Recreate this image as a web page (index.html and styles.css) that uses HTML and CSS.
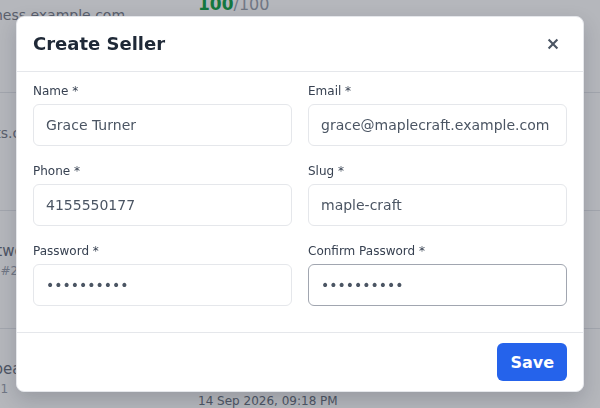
FILE: index.html
```html
<!DOCTYPE html>
<html lang="en">
<head>
<meta charset="utf-8">
<title>Create Seller</title>
<link rel="stylesheet" href="styles.css">
</head>
<body>
<div class="page">
  <div class="row">
    <div class="cell-main">
      <div class="line-name muted">business.example.com</div>
    </div>
    <div class="cell-score">
      <div class="score"><span class="score-value">100</span><span class="score-max">/100</span></div>
      <div class="date">12 Sep 2026, 10:02 AM</div>
    </div>
  </div>
  <div class="row">
    <div class="cell-main">
      <div class="line-name muted">plants.com</div>
    </div>
    <div class="cell-score">
      <div class="score"><span class="score-value">98</span><span class="score-max">/100</span></div>
      <div class="date">13 Sep 2026, 02:45 PM</div>
    </div>
  </div>
  <div class="row">
    <div class="cell-main">
      <div class="line-name">Fleetwood Goods</div>
      <div class="line-sub">Store #2</div>
    </div>
    <div class="cell-score">
      <div class="score"><span class="score-value">95</span><span class="score-max">/100</span></div>
      <div class="date">14 Sep 2026, 08:30 AM</div>
    </div>
  </div>
  <div class="row">
    <div class="cell-main">
      <div class="line-name">Sunbeam Studio</div>
      <div class="line-sub">Store 1</div>
    </div>
    <div class="cell-score">
      <div class="score"><span class="score-value">100</span><span class="score-max">/100</span></div>
      <div class="date">14 Sep 2026, 09:18 PM</div>
    </div>
  </div>
</div>

<div class="overlay">
  <div class="modal" role="dialog" aria-labelledby="modal-title">
    <div class="modal-header">
      <h2 class="modal-title" id="modal-title">Create Seller</h2>
      <button class="close-btn" type="button" aria-label="Close">
        <svg width="12" height="12" viewBox="0 0 12 12" aria-hidden="true">
          <path d="M1.6 1.6 L10.4 10.4 M10.4 1.6 L1.6 10.4" stroke="#4b5563" stroke-width="2.1" fill="none"/>
        </svg>
      </button>
    </div>
    <form class="modal-body">
      <div class="field">
        <label class="field-label">Name *</label>
        <input class="field-input" type="text" value="Grace Turner">
      </div>
      <div class="field">
        <label class="field-label">Email *</label>
        <input class="field-input" type="text" value="grace@maplecraft.example.com">
      </div>
      <div class="field">
        <label class="field-label">Phone *</label>
        <input class="field-input" type="text" value="4155550177">
      </div>
      <div class="field">
        <label class="field-label">Slug *</label>
        <input class="field-input" type="text" value="maple-craft">
      </div>
      <div class="field">
        <label class="field-label">Password *</label>
        <input class="field-input" type="password" value="secretpass">
      </div>
      <div class="field">
        <label class="field-label">Confirm Password *</label>
        <input class="field-input is-focused" type="password" value="secretpass">
      </div>
    </form>
    <div class="modal-footer">
      <button class="save-btn" type="button">Save</button>
    </div>
  </div>
</div>
</body>
</html>
```

FILE: styles.css
```css
html, body {
  margin: 0;
  padding: 0;
}

body {
  width: 600px;
  height: 408px;
  overflow: hidden;
  background: #ffffff;
  font-family: "DejaVu Sans", "Noto Sans", sans-serif;
  color: #374151;
}

/* background page (table of sellers) */
.page {
  margin-left: -35px;
  margin-top: -25px;
  height: 433px;
  overflow: hidden;
}

.row {
  display: flex;
  height: 118px;
  box-sizing: border-box;
  border-bottom: 1px solid #e5e7eb;
  padding-top: 30px;
}

.cell-main {
  width: 233px;
  flex-shrink: 0;
}

.line-name {
  font-size: 15px;
  line-height: 20px;
  white-space: nowrap;
  color: #6b7280;
}

.line-name.muted {
  font-size: 14px;
  color: #7b818c;
}

.line-sub {
  font-size: 12px;
  line-height: 20px;
  color: #9ca3af;
  white-space: nowrap;
}

.cell-score {
  margin-top: -13px;
}

.score {
  line-height: 24px;
  white-space: nowrap;
}

.score-value {
  font-size: 17px;
  font-weight: 700;
  color: #16a34a;
}

.score-max {
  font-size: 16px;
  color: #9ca3af;
}

.date {
  margin-top: 22px;
  font-size: 12px;
  line-height: 16px;
  color: #6b7280;
  white-space: nowrap;
}

/* overlay + modal */
.overlay {
  position: fixed;
  inset: 0;
  background: rgba(17, 24, 39, 0.31);
  display: flex;
  align-items: center;
  justify-content: center;
}

.modal {
  width: 568px;
  box-sizing: border-box;
  background: #ffffff;
  border: 1px solid #e5e7eb;
  border-radius: 8px;
  box-shadow: 0 8px 20px rgba(17, 24, 39, 0.18);
}

.modal-header {
  display: flex;
  align-items: center;
  justify-content: space-between;
  padding: 16px;
  border-bottom: 1px solid #e5e7eb;
}

.modal-title {
  margin: 0;
  font-size: 18px;
  line-height: 22px;
  font-weight: 700;
  color: #1f2937;
}

.close-btn {
  width: 28px;
  height: 22px;
  padding: 0;
  border: none;
  background: transparent;
  display: flex;
  align-items: center;
  justify-content: center;
  cursor: pointer;
}

.modal-body {
  margin: 0;
  padding: 10px 16px 26px;
  display: grid;
  grid-template-columns: 1fr 1fr;
  column-gap: 16px;
  row-gap: 16px;
}

.field {
  display: flex;
  flex-direction: column;
  min-width: 0;
}

.field-label {
  display: block;
  font-size: 12px;
  line-height: 18px;
  margin-bottom: 4px;
  color: #374151;
}

.field-input {
  width: 100%;
  box-sizing: border-box;
  height: 42px;
  margin: 0;
  padding: 0 12px;
  border: 1px solid #e5e7eb;
  border-radius: 6px;
  background: #ffffff;
  font-family: "DejaVu Sans", "Noto Sans", sans-serif;
  font-size: 14px;
  color: #4b5563;
  outline: none;
}

.field-input.is-focused {
  border-color: #a1a6b0;
}

.modal-footer {
  display: flex;
  justify-content: flex-end;
  padding: 10px 16px;
  border-top: 1px solid #e5e7eb;
}

.save-btn {
  height: 38px;
  padding: 0 13px;
  border: none;
  border-radius: 6px;
  background: #2563eb;
  color: #ffffff;
  font-family: "DejaVu Sans", "Noto Sans", sans-serif;
  font-size: 16px;
  font-weight: 700;
  cursor: pointer;
}
```
